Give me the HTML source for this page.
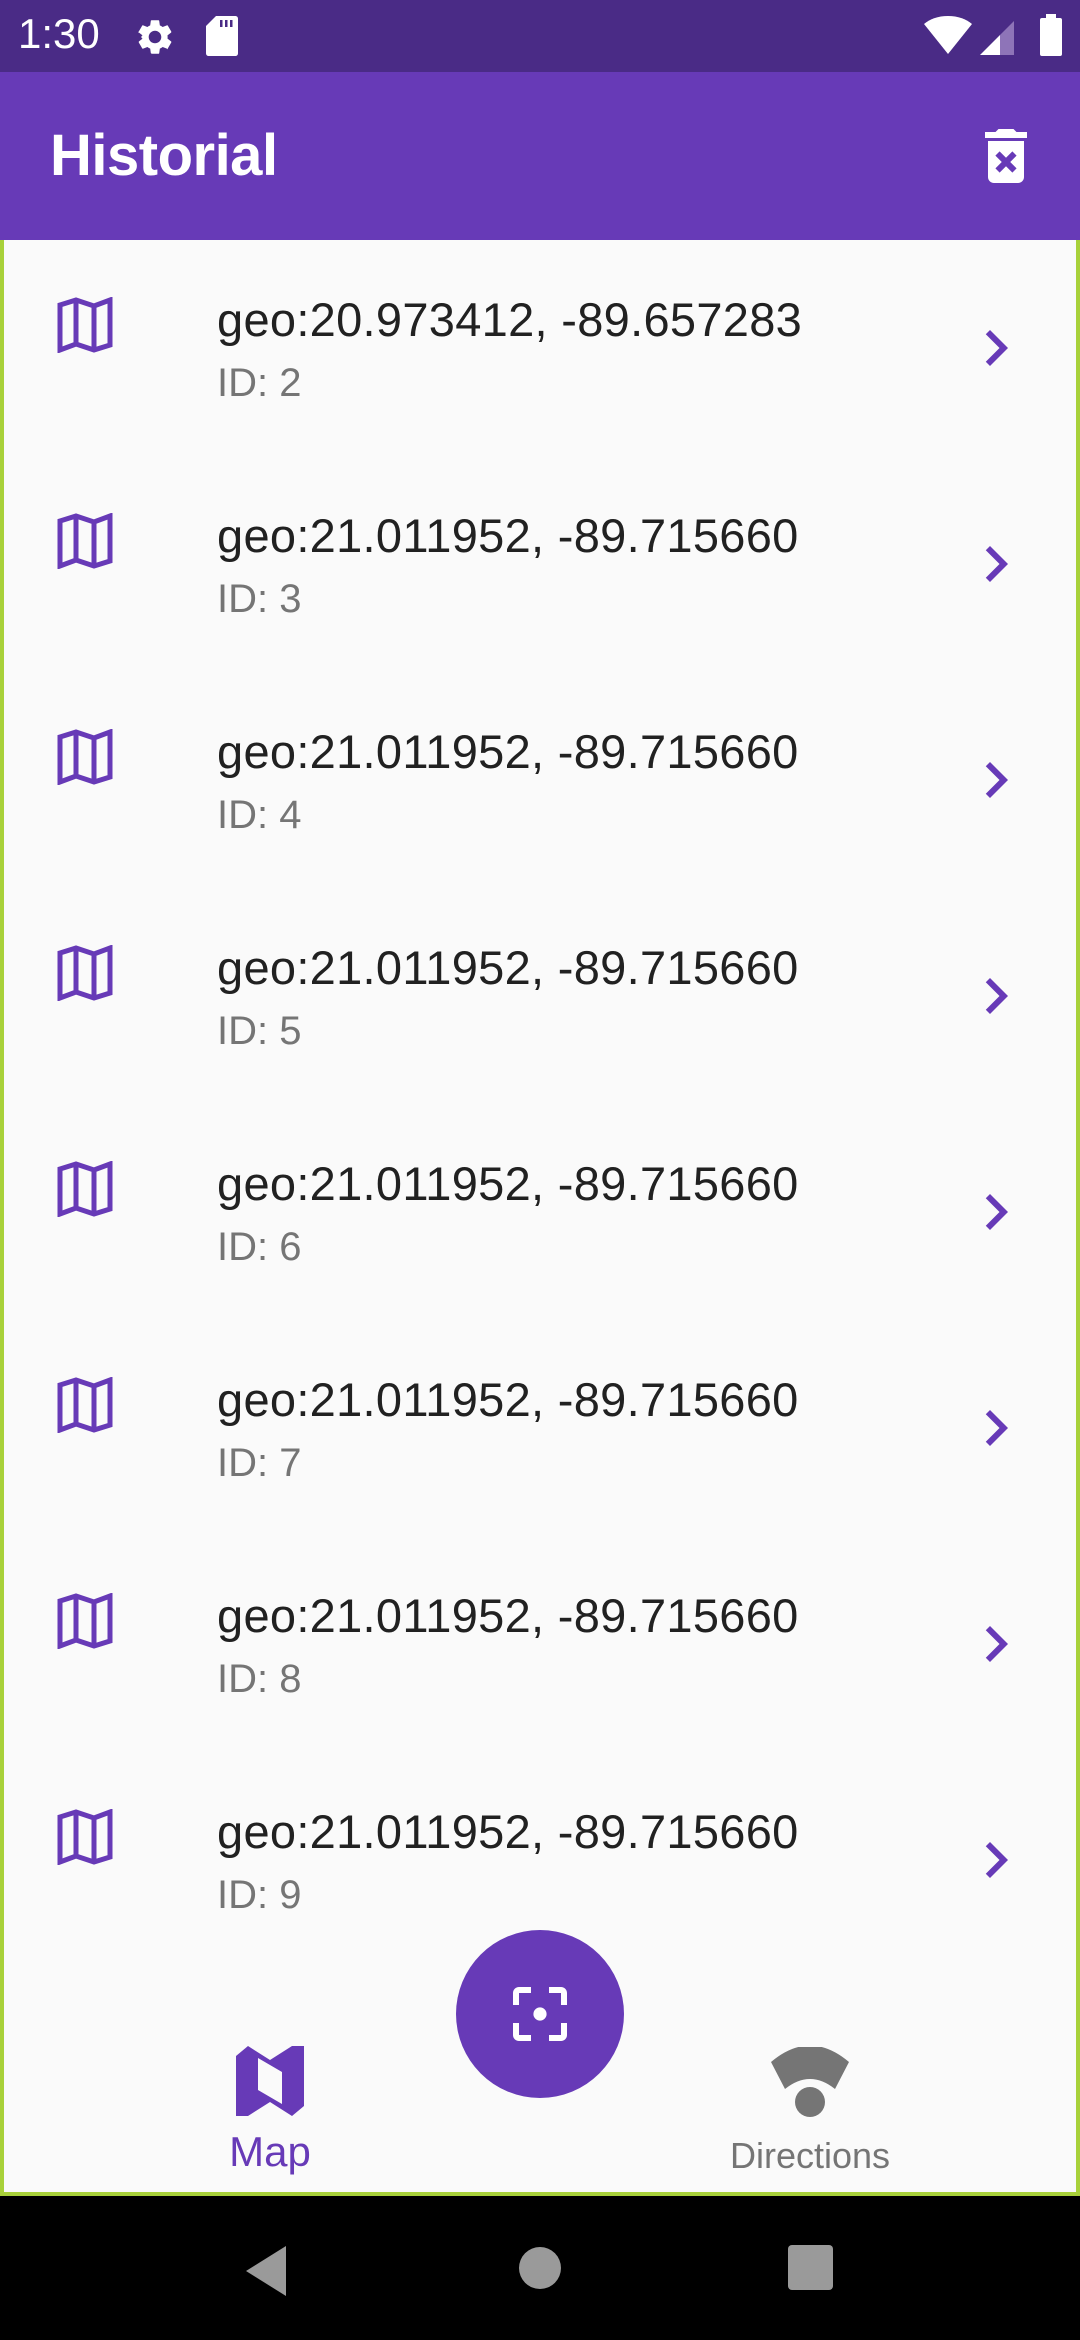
<!DOCTYPE html>
<html><head><meta charset="utf-8"><style>
*{margin:0;padding:0;box-sizing:border-box}
html,body{width:1080px;height:2340px;overflow:hidden}
body{background:#000;font-family:"Liberation Sans",Roboto,sans-serif;position:relative}
.app{position:absolute;left:0;top:0;width:1080px;height:2196px;background:#fafafa;border:4px solid #a8d13a;border-top-color:#6d8a1e}
.status{position:absolute;left:0;top:0;width:1080px;height:72px;background:#4a2b86}
.bar{position:absolute;left:0;top:72px;width:1080px;height:168px;background:#673ab7}
.title{position:absolute;left:50px;top:122px;font-size:58px;color:#fff;font-weight:bold;letter-spacing:-0.5px}
.item{position:absolute;left:0;width:1080px;height:216px}
.item .t{position:absolute;left:217px;top:52px;font-size:47px;color:#212121;white-space:nowrap;letter-spacing:0.3px}
.item .s{position:absolute;left:217px;top:121px;font-size:40px;color:#757575}
.item svg.m{position:absolute;left:57px;top:57px}
.item svg.c{position:absolute;left:960px;top:72px}
.nav{position:absolute;top:2196px;left:0;width:1080px;height:144px;background:#000}
</style></head><body>
<div class="app"></div>
<div class="status">
<div style="position:absolute;left:18px;top:10px;font-size:42px;color:#fff">1:30</div>
<svg style="position:absolute;left:134px;top:16px" width="42" height="42" viewBox="0 0 24 24"><path fill="#fff" d="M19.14 12.94c.04-.3.06-.61.06-.94 0-.32-.02-.64-.07-.94l2.03-1.58a.49.49 0 0 0 .12-.61l-1.92-3.32a.49.49 0 0 0-.59-.22l-2.39.96c-.5-.38-1.030-.7-1.62-.94l-.36-2.54a.48.48 0 0 0-.48-.41h-3.84c-.24 0-.43.17-.47.41l-.36 2.54c-.59.24-1.13.57-1.62.94l-2.39-.96a.49.49 0 0 0-.59.22L2.74 8.87c-.12.21-.8.47.12.61l2.03 1.58c-.5.3-.7.62-.7.94s.2.64.7.94l-2.03 1.58a.49.49 0 0 0-.12.61l1.92 3.32c.12.22.37.29.59.22l2.39-.96c.5.38 1.03.7 1.62.94l.36 2.54c.5.24.24.41.48.41h3.84c.24 0 .44-.17.47-.41l.36-2.54c.59-.24 1.13-.56 1.62-.94l2.39.96c.22.8.47 0 .59-.22l1.92-3.32c.12-.22.07-.47-.12-.61l-2.01-1.58zM12 15.6c-1.98 0-3.6-1.62-3.6-3.6s1.62-3.6 3.6-3.6 3.6 1.62 3.6 3.6-1.62 3.6-3.6 3.6z"/></svg>
<svg style="position:absolute;left:206px;top:16px" width="32" height="40" viewBox="0 0 32 40"><path fill="#fff" d="M10 0h19c2 0 3 1 3 3v34c0 2-1 3-3 3H3c-2 0-3-1-3-3V10z"/><rect x="14" y="4" width="2.5" height="7" fill="#4a2b86"/><rect x="19" y="4" width="2.5" height="7" fill="#4a2b86"/><rect x="24" y="4" width="2.5" height="7" fill="#4a2b86"/></svg>
<svg style="position:absolute;left:924px;top:16px" width="48" height="38" viewBox="0 0 48 38"><path fill="#fff" d="M24 38L0 8C6 3 14 0 24 0s18 3 24 8z"/></svg>
<svg style="position:absolute;left:980px;top:19px" width="36" height="36" viewBox="0 0 36 36"><path fill="#fff" d="M0 36L20 16V36z"/><path fill="#8e74b8" d="M20 16L34 2V36H20z"/></svg>
<svg style="position:absolute;left:1040px;top:14px" width="22" height="42" viewBox="0 0 22 42"><rect x="6" y="0" width="10" height="5" fill="#fff"/><rect x="0" y="4" width="22" height="38" rx="2" fill="#fff"/></svg>
</div>
<div class="bar"></div>
<div class="title">Historial</div>
<svg style="position:absolute;left:970px;top:120px" width="72" height="72" viewBox="0 0 24 24"><path fill="#fff" d="M6 19c0 1.1.9 2 2 2h8c1.1 0 2-.9 2-2V7H6v12zm2.46-7.12l1.41-1.41L12 12.59l2.12-2.12 1.41 1.41L13.41 14l2.12 2.12-1.41 1.41L12 15.41l-2.12 2.12-1.41-1.41L10.59 14l-2.13-2.12zM15.5 4l-1-1h-5l-1 1H5v2h14V4z"/></svg>

<div class="item" style="top:240px"><svg class="m" width="56" height="56" viewBox="0 0 56 56"><path d="M3 8L19 3L37 9L53 3V48L37 53L19 47L3 53Z M19 3V47 M37 9V53" fill="none" stroke="#673ab7" stroke-width="5"/></svg><div class="t">geo:20.973412, -89.657283</div><div class="s">ID: 2</div><svg class="c" width="72" height="72" viewBox="0 0 24 24"><path fill="#673ab7" d="M10 6L8.59 7.41 13.17 12l-4.58 4.59L10 18l6-6z"/></svg></div>
<div class="item" style="top:456px"><svg class="m" width="56" height="56" viewBox="0 0 56 56"><path d="M3 8L19 3L37 9L53 3V48L37 53L19 47L3 53Z M19 3V47 M37 9V53" fill="none" stroke="#673ab7" stroke-width="5"/></svg><div class="t">geo:21.011952, -89.715660</div><div class="s">ID: 3</div><svg class="c" width="72" height="72" viewBox="0 0 24 24"><path fill="#673ab7" d="M10 6L8.59 7.41 13.17 12l-4.58 4.59L10 18l6-6z"/></svg></div>
<div class="item" style="top:672px"><svg class="m" width="56" height="56" viewBox="0 0 56 56"><path d="M3 8L19 3L37 9L53 3V48L37 53L19 47L3 53Z M19 3V47 M37 9V53" fill="none" stroke="#673ab7" stroke-width="5"/></svg><div class="t">geo:21.011952, -89.715660</div><div class="s">ID: 4</div><svg class="c" width="72" height="72" viewBox="0 0 24 24"><path fill="#673ab7" d="M10 6L8.59 7.41 13.17 12l-4.58 4.59L10 18l6-6z"/></svg></div>
<div class="item" style="top:888px"><svg class="m" width="56" height="56" viewBox="0 0 56 56"><path d="M3 8L19 3L37 9L53 3V48L37 53L19 47L3 53Z M19 3V47 M37 9V53" fill="none" stroke="#673ab7" stroke-width="5"/></svg><div class="t">geo:21.011952, -89.715660</div><div class="s">ID: 5</div><svg class="c" width="72" height="72" viewBox="0 0 24 24"><path fill="#673ab7" d="M10 6L8.59 7.41 13.17 12l-4.58 4.59L10 18l6-6z"/></svg></div>
<div class="item" style="top:1104px"><svg class="m" width="56" height="56" viewBox="0 0 56 56"><path d="M3 8L19 3L37 9L53 3V48L37 53L19 47L3 53Z M19 3V47 M37 9V53" fill="none" stroke="#673ab7" stroke-width="5"/></svg><div class="t">geo:21.011952, -89.715660</div><div class="s">ID: 6</div><svg class="c" width="72" height="72" viewBox="0 0 24 24"><path fill="#673ab7" d="M10 6L8.59 7.41 13.17 12l-4.58 4.59L10 18l6-6z"/></svg></div>
<div class="item" style="top:1320px"><svg class="m" width="56" height="56" viewBox="0 0 56 56"><path d="M3 8L19 3L37 9L53 3V48L37 53L19 47L3 53Z M19 3V47 M37 9V53" fill="none" stroke="#673ab7" stroke-width="5"/></svg><div class="t">geo:21.011952, -89.715660</div><div class="s">ID: 7</div><svg class="c" width="72" height="72" viewBox="0 0 24 24"><path fill="#673ab7" d="M10 6L8.59 7.41 13.17 12l-4.58 4.59L10 18l6-6z"/></svg></div>
<div class="item" style="top:1536px"><svg class="m" width="56" height="56" viewBox="0 0 56 56"><path d="M3 8L19 3L37 9L53 3V48L37 53L19 47L3 53Z M19 3V47 M37 9V53" fill="none" stroke="#673ab7" stroke-width="5"/></svg><div class="t">geo:21.011952, -89.715660</div><div class="s">ID: 8</div><svg class="c" width="72" height="72" viewBox="0 0 24 24"><path fill="#673ab7" d="M10 6L8.59 7.41 13.17 12l-4.58 4.59L10 18l6-6z"/></svg></div>
<div class="item" style="top:1752px"><svg class="m" width="56" height="56" viewBox="0 0 56 56"><path d="M3 8L19 3L37 9L53 3V48L37 53L19 47L3 53Z M19 3V47 M37 9V53" fill="none" stroke="#673ab7" stroke-width="5"/></svg><div class="t">geo:21.011952, -89.715660</div><div class="s">ID: 9</div><svg class="c" width="72" height="72" viewBox="0 0 24 24"><path fill="#673ab7" d="M10 6L8.59 7.41 13.17 12l-4.58 4.59L10 18l6-6z"/></svg></div>

<div style="position:absolute;left:4px;top:1935px;width:1072px;height:257px;background:#fafafa"></div>
<div style="position:absolute;left:456px;top:1930px;width:168px;height:168px;border-radius:50%;background:#673ab7"></div>
<svg style="position:absolute;left:504px;top:1978px" width="72" height="72" viewBox="0 0 24 24"><path fill="#fff" d="M5 15H3v4c0 1.1.9 2 2 2h4v-2H5v-4zM5 5h4V3H5c-1.1 0-2 .9-2 2v4h2V5zm14-2h-4v2h4v4h2V5c0-1.1-.9-2-2-2zm0 16h-4v2h4c1.1 0 2-.9 2-2v-4h-2v4z"/><circle cx="12" cy="12" r="2.2" fill="#fff"/></svg>
<svg style="position:absolute;left:236px;top:2046px" width="68" height="70" viewBox="0 0 68 70"><path fill="#673ab7" fill-rule="evenodd" d="M0 10L12 0L34 14L56 0L68 0V60L56 70L34 56L12 70L0 70Z M22 12L46 26V58L22 44Z"/></svg>
<div style="position:absolute;left:170px;top:2128px;width:200px;text-align:center;font-size:42px;color:#673ab7">Map</div>
<svg style="position:absolute;left:771px;top:2047px" width="78" height="70" viewBox="0 0 78 70"><path fill="#757575" d="M0 15Q39 -18 78 15L64 42Q39 22 14 42Z"/><ellipse cx="39" cy="55" rx="15" ry="15" fill="#757575"/></svg>
<div style="position:absolute;left:680px;top:2135px;width:260px;text-align:center;font-size:36px;color:#757575">Directions</div>

<div class="nav">
<svg style="position:absolute;left:246px;top:50px" width="42" height="50" viewBox="0 0 42 50"><path fill="#9a9a9a" d="M40 0V50L0 25Z"/></svg>
<div style="position:absolute;left:519px;top:51px;width:42px;height:42px;border-radius:50%;background:#9a9a9a"></div>
<div style="position:absolute;left:788px;top:49px;width:45px;height:45px;border-radius:4px;background:#9a9a9a"></div>
</div>
</body></html>
